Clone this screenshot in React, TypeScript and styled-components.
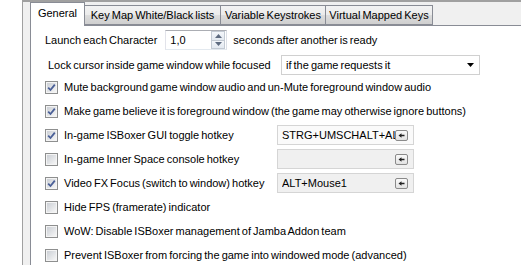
import React from 'react';
import styled, { createGlobalStyle } from 'styled-components';

const Global = createGlobalStyle`
  html, body { margin: 0; padding: 0; background: #fff; }
  body {
    font-family: "Liberation Sans", Arial, sans-serif;
    font-size: 11px;
    word-spacing: -1px;
    color: #000;
  }
`;

const Page = styled.div`
  display: flex;
  width: 521px;
  height: 265px;
  overflow: hidden;
  background: #fff;
`;

const Gutter = styled.div`
  flex: none;
  width: 22px;
  background: #fff;
`;

const Form = styled.div`
  flex: 1;
  min-width: 0;
  display: flex;
  background: #f0f0f0;
  border-top: 2px solid #a0a0a0;
  border-left: 1px solid #a0a0a0;
  padding-left: 7px;
`;

const TabControl = styled.div`
  flex: 1;
  min-width: 0;
  display: flex;
  flex-direction: column;
`;

const TabStrip = styled.div`
  display: flex;
  align-items: flex-end;
  height: 23px;
  flex: none;
`;

const Tab = styled.div<{ $active?: boolean; $w: number }>`
  box-sizing: border-box;
  width: ${(p) => p.$w}px;
  height: ${(p) => (p.$active ? 24 : 20)}px;
  margin-bottom: ${(p) => (p.$active ? -1 : 0)}px;
  position: relative;
  z-index: ${(p) => (p.$active ? 2 : 1)};
  display: flex;
  align-items: center;
  justify-content: center;
  padding-bottom: ${(p) => (p.$active ? 3 : 0)}px;
  border: 1px solid #898c95;
  border-bottom: ${(p) => (p.$active ? 'none' : '1px solid #898c95')};
  margin-left: ${(p) => (p.$active ? 0 : -1)}px;
  background: ${(p) =>
    p.$active ? '#fff' : 'linear-gradient(#f3f3f3, #ebebeb 50%, #dddddd 51%, #cfcfcf)'};
  white-space: nowrap;
  &:first-child { margin-left: 0; }
`;

const Panel = styled.div`
  flex: 1;
  display: flex;
  flex-direction: column;
  background: #fff;
  border-top: 1px solid #898c95;
  border-left: 1px solid #898c95;
  padding: 4px 0 0 14px;
`;

const Row = styled.div<{ $h?: number; $mt?: number }>`
  display: flex;
  align-items: center;
  height: ${(p) => p.$h ?? 24}px;
  margin-top: ${(p) => p.$mt ?? 0}px;
  white-space: nowrap;
  flex: none;
`;

const Label = styled.span<{ $w?: number; $pl?: number }>`
  flex: none;
  ${(p) => (p.$w ? `width: ${p.$w}px;` : '')}
  padding-left: ${(p) => p.$pl ?? 0}px;
  box-sizing: border-box;
`;

const SpinBox = styled.div`
  box-sizing: border-box;
  width: 62px;
  height: 20px;
  margin: 0 6px 0 8px;
  display: flex;
  align-items: center;
  border: 1px solid #abadb3;
  border-color: #abadb3 #dbdfe6 #e3e9ef #e2e3ea;
  background: #fff;
  padding-left: 4px;
`;

const SpinValue = styled.span`
  flex: 1;
`;

const SpinButtons = styled.div`
  display: flex;
  flex-direction: column;
  width: 14px;
  height: 18px;
  margin-right: 1px;
`;

const SpinButton = styled.div`
  flex: 1;
  display: flex;
  align-items: center;
  justify-content: center;
  box-sizing: border-box;
  border: 1px solid #c3cad3;
  background: linear-gradient(#f3f6fa, #e3e9f0);
  & + & { border-top: none; }
`;

const Select = styled.div`
  box-sizing: border-box;
  width: 199px;
  height: 20px;
  display: flex;
  align-items: center;
  border: 1px solid #d0d0d0;
  background: #fff;
  padding: 0 5px 0 4px;
`;

const SelectText = styled.span`
  flex: 1;
`;

const CheckBox = styled.div`
  box-sizing: border-box;
  flex: none;
  width: 13px;
  height: 13px;
  margin-right: 6px;
  border: 1px solid #8e8f8f;
  padding: 1px;
  background: #f4f4f4;
  display: flex;
`;

const CheckInner = styled.div`
  flex: 1;
  display: flex;
  align-items: center;
  justify-content: center;
  background: linear-gradient(135deg, #cbcfd5, #f6f6f6);
`;

const HotkeyBox = styled.div<{ $bg: string }>`
  box-sizing: border-box;
  width: 137px;
  height: 20px;
  display: flex;
  align-items: center;
  border: 1px solid #d5d5d5;
  background: ${(p) => p.$bg};
  padding: 0 4px 0 4px;
`;

const HotkeyText = styled.span`
  flex: 1;
  min-width: 0;
  overflow: hidden;
  white-space: nowrap;
`;

const HotkeyButton = styled.div`
  box-sizing: border-box;
  flex: none;
  width: 13px;
  height: 11px;
  border: 1px solid #8a8a8a;
  border-radius: 2px;
  background: linear-gradient(#fafafa, #e2e2e2);
  display: flex;
  align-items: center;
  justify-content: center;
  margin-right: 1px;
`;

const Check = ({ checked }: { checked: boolean }) => (
  <CheckBox>
    <CheckInner>
      {checked && (
        <svg width="9" height="9" viewBox="0 0 9 9">
          <path d="M1.2 4.6 L3.5 7 L7.8 1.6" fill="none" stroke="#4a5f97" strokeWidth="1.8" />
        </svg>
      )}
    </CheckInner>
  </CheckBox>
);

const ArrowLeft = () => (
  <svg width="7" height="5" viewBox="0 0 7 5">
    <path d="M0.5 2.5 L3.5 0.3 L3.5 1.8 L6.5 1.8 L6.5 3.2 L3.5 3.2 L3.5 4.7 Z" fill="#222" />
  </svg>
);

type Item = { text: string; checked: boolean; hotkey?: { value: string; bg: string } };

const items: Item[] = [
  { text: 'Mute background game window audio and un-Mute foreground window audio', checked: true },
  { text: 'Make game believe it is foreground window (the game may otherwise ignore buttons)', checked: true },
  { text: 'In-game ISBoxer GUI toggle hotkey', checked: true, hotkey: { value: 'STRG+UMSCHALT+ALT', bg: '#fafafa' } },
  { text: 'In-game Inner Space console hotkey', checked: false, hotkey: { value: '', bg: '#f0f0f0' } },
  { text: 'Video FX Focus (switch to window) hotkey', checked: true, hotkey: { value: 'ALT+Mouse1', bg: '#f0f0f0' } },
  { text: 'Hide FPS (framerate) indicator', checked: false },
  { text: 'WoW: Disable ISBoxer management of Jamba Addon team', checked: false },
  { text: 'Prevent ISBoxer from forcing the game into windowed mode (advanced)', checked: false },
];

const tabs = [
  { label: 'General', w: 55, active: true },
  { label: 'Key Map White/Black lists', w: 137 },
  { label: 'Variable Keystrokes', w: 106 },
  { label: 'Virtual Mapped Keys', w: 108 },
];

export default function App() {
  return (
    <>
      <Global />
      <Page>
        <Gutter />
        <Form>
          <TabControl>
            <TabStrip>
              {tabs.map((t) => (
                <Tab key={t.label} $active={t.active} $w={t.w}>
                  {t.label}
                </Tab>
              ))}
            </TabStrip>
            <Panel>
              <Row $h={20}>
                <Label>Launch each Character</Label>
                <SpinBox>
                  <SpinValue>1,0</SpinValue>
                  <SpinButtons>
                    <SpinButton>
                      <svg width="7" height="4" viewBox="0 0 7 4">
                        <path d="M0 4 L3.5 0 L7 4 Z" fill="#5e6b80" />
                      </svg>
                    </SpinButton>
                    <SpinButton>
                      <svg width="7" height="4" viewBox="0 0 7 4">
                        <path d="M0 0 L3.5 4 L7 0 Z" fill="#5e6b80" />
                      </svg>
                    </SpinButton>
                  </SpinButtons>
                </SpinBox>
                <Label>seconds after another is ready</Label>
              </Row>
              <Row $h={20} $mt={5}>
                <Label $w={236} $pl={3}>
                  Lock cursor inside game window while focused
                </Label>
                <Select>
                  <SelectText>if the game requests it</SelectText>
                  <svg width="7" height="4" viewBox="0 0 7 4">
                    <path d="M0 0 L7 0 L3.5 4 Z" fill="#000" />
                  </svg>
                </Select>
              </Row>
              {items.map((it) => (
                <Row key={it.text}>
                  <Check checked={it.checked} />
                  <Label $w={it.hotkey ? 213 : undefined}>{it.text}</Label>
                  {it.hotkey && (
                    <HotkeyBox $bg={it.hotkey.bg}>
                      <HotkeyText>{it.hotkey.value}</HotkeyText>
                      <HotkeyButton>
                        <ArrowLeft />
                      </HotkeyButton>
                    </HotkeyBox>
                  )}
                </Row>
              ))}
            </Panel>
          </TabControl>
        </Form>
      </Page>
    </>
  );
}
